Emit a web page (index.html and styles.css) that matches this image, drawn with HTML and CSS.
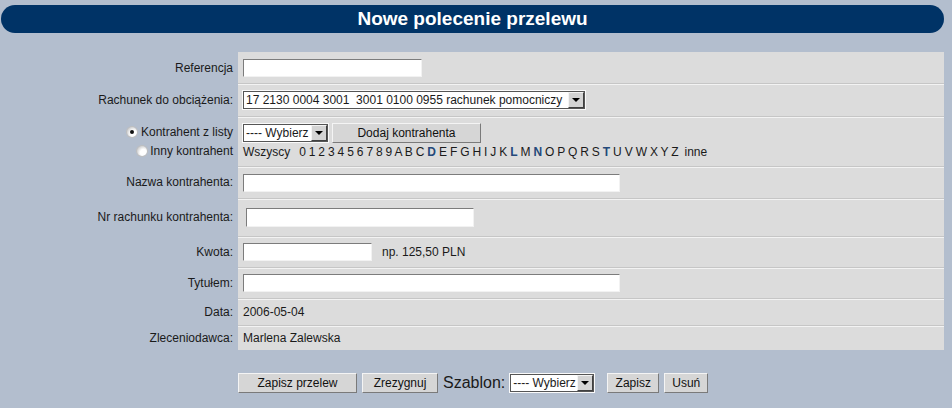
FILE: index.html
```html
<html>
  <head>
    <meta http-equiv="Content-Type" content="text/html; charset=UTF-8">
    <link rel="stylesheet" href="styles.css">
  </head>
  <body>

    <div class="bar">Nowe polecenie przelewu</div>

    <div class="form">
      <div class="row r-ref">
        <div class="lbl">Referencja</div>
        <div class="fld"><input type="text" class="w-ref"></div>
      </div>

      <div class="row r-acc">
        <div class="lbl">Rachunek do obciążenia:</div>
        <div class="fld">
          <div class="sel w-acc"><span class="sel-txt">17 2130 0004 3001&nbsp; 3001 0100 0955 rachunek pomocniczy</span><span class="arr"></span></div>
        </div>
      </div>

      <div class="row r-kon">
        <div class="lbl">
          <div class="line1"><span class="radio on"></span> Kontrahent z listy</div>
          <div class="line2"><span class="radio"></span> Inny kontrahent</div>
        </div>
        <div class="fld">
          <div class="line1">
            <div class="sel w-wyb"><span class="sel-txt">---- Wybierz</span><span class="arr"></span></div>
            <button class="btn btn-add">Dodaj kontrahenta</button>
          </div>
          <div class="line2 letters">Wszyscy&nbsp;&nbsp; 0 1 2 3 4 5 6 7 8 9 A B C <b>D</b> E F G H I J K <b>L</b> M <b>N</b> O P Q R S <b>T</b> U V W X Y Z &nbsp;inne</div>
        </div>
      </div>

      <div class="row r-naz">
        <div class="lbl">Nazwa kontrahenta:</div>
        <div class="fld"><input type="text" class="w-long"></div>
      </div>

      <div class="row r-nr">
        <div class="lbl">Nr rachunku kontrahenta:</div>
        <div class="fld"><input type="text" class="w-nr"></div>
      </div>

      <div class="row r-kw">
        <div class="lbl">Kwota:</div>
        <div class="fld"><input type="text" class="w-kw"><span class="hint">np. 125,50 PLN</span></div>
      </div>

      <div class="row r-tyt">
        <div class="lbl">Tytułem:</div>
        <div class="fld"><input type="text" class="w-long"></div>
      </div>

      <div class="row r-data">
        <div class="lbl">Data:</div>
        <div class="fld">2006-05-04</div>
      </div>

      <div class="row r-zl">
        <div class="lbl">Zleceniodawca:</div>
        <div class="fld">Marlena Zalewska</div>
      </div>
    </div>

    <div class="actions">
      <button class="btn b-zap">Zapisz przelew</button>
      <button class="btn b-rez">Zrezygnuj</button>
      <span class="szablon">Szablon:</span>
      <div class="sel w-sz"><span class="sel-txt">---- Wybierz</span><span class="arr"></span></div>
      <button class="btn b-zs">Zapisz</button>
      <button class="btn b-us">Usuń</button>
    </div>

  </body>
</html>
```

FILE: styles.css
```css
body {
  margin: 0;
  background: #b3bece;
  font-family: "Liberation Sans", Arial, sans-serif;
  font-size: 12px;
  color: #1a1a1a;
}

.bar {
  margin: 5px 8px 0 1px;
  height: 28px;
  line-height: 28px;
  border-radius: 14px;
  background: #003366;
  color: #fff;
  font-size: 19px;
  font-weight: bold;
  text-align: center;
}

.form {
  margin: 19px 8px 0 0;
}

.row {
  display: flex;
}

.lbl {
  width: 233px;
  padding-right: 5px;
  text-align: right;
  display: flex;
  align-items: center;
  justify-content: flex-end;
}

.fld {
  flex: 1;
  background: #dcdcdc;
  padding-left: 5px;
  display: flex;
  align-items: center;
  border-top: 1px solid #c6c6c6;
  box-shadow: inset 0 1px #f3f3f3;
}

.r-ref .fld {
  border-top: none;
  box-shadow: none;
}

.r-ref { height: 31px; }
.r-acc { height: 33px; }
.r-kon { height: 50px; }
.r-naz { height: 32px; }
.r-nr { height: 38px; }
.r-kw { height: 31px; }
.r-tyt { height: 31px; }
.r-data { height: 27px; }
.r-zl { height: 25px; }

.r-kon .lbl, .r-kon .fld {
  flex-direction: column;
  align-items: stretch;
  justify-content: flex-start;
  padding-top: 6px;
}

.r-kon .lbl .line1, .r-kon .lbl .line2 {
  display: flex;
  align-items: center;
  justify-content: flex-end;
}

.line1 {
  height: 20px;
  display: flex;
  align-items: center;
}

.line2 {
  height: 18px;
  line-height: 18px;
}

.radio {
  display: inline-block;
  width: 10px;
  height: 10px;
  border-radius: 50%;
  background: radial-gradient(circle at 65% 65%, #ffffff 35%, #c8c8c8 80%);
  box-shadow: 0 0 0 1px #bfbfbf;
  margin-right: 4px;
  position: relative;
}

.radio.on::after {
  content: "";
  position: absolute;
  left: 3px;
  top: 3px;
  width: 4px;
  height: 4px;
  border-radius: 50%;
  background: #111;
}

.r-kon .lbl .line2 .radio {
  margin-right: 3px;
}

input {
  box-sizing: border-box;
  height: 18px;
  margin: 0;
  background: #fff;
  border: 1px solid;
  border-color: #7c7c7c #f2f2f2 #f2f2f2 #7c7c7c;
  font-family: "Liberation Sans", Arial, sans-serif;
  font-size: 12px;
}

.w-ref { width: 179px; }
.w-long { width: 377px; }
.w-nr { width: 228px; margin-left: 3px; height: 19px; }
.w-kw { width: 129px; }

.hint {
  margin-left: 10px;
}

.sel {
  box-sizing: border-box;
  height: 18px;
  display: flex;
  align-items: center;
  background: #fff;
  border: 1px solid #555;
  box-shadow: 0 0 0 1px #fafafa;
  overflow: hidden;
}

.sel-txt {
  flex: 1;
  padding-left: 2px;
  white-space: nowrap;
  overflow: hidden;
}

.arr {
  box-sizing: border-box;
  width: 16px;
  height: 16px;
  background: #d4d4d4;
  border: 1px solid;
  border-color: #f4f4f4 #404040 #404040 #f4f4f4;
  position: relative;
  flex: none;
}

.arr::after {
  content: "";
  position: absolute;
  left: 3px;
  top: 5px;
  border-left: 4px solid transparent;
  border-right: 4px solid transparent;
  border-top: 4px solid #000;
}

.w-acc { width: 342px; }
.w-wyb { width: 85px; }
.w-sz { width: 84px; }

.btn {
  box-sizing: border-box;
  height: 20px;
  padding: 0;
  margin: 0;
  background: #d6d6d6;
  border: 1px solid;
  border-color: #f4f4f4 #7a7a7a #7a7a7a #f4f4f4;
  font-family: "Liberation Sans", Arial, sans-serif;
  font-size: 12px;
  color: #111;
}

.btn-add {
  width: 149px;
  margin-left: 4px;
}

.letters {
  word-spacing: -0.4px;
}

.letters b {
  color: #24497a;
}

.actions {
  display: flex;
  align-items: center;
  margin-top: 23px;
  padding-left: 238px;
}

.b-zap { width: 119px; }
.b-rez { width: 76px; margin-left: 5px; }
.b-zs { width: 52px; margin-left: 13px; }
.b-us { width: 44px; margin-left: 5px; }

.szablon {
  font-size: 16px;
  margin: 0 5px 0 5px;
}
```
